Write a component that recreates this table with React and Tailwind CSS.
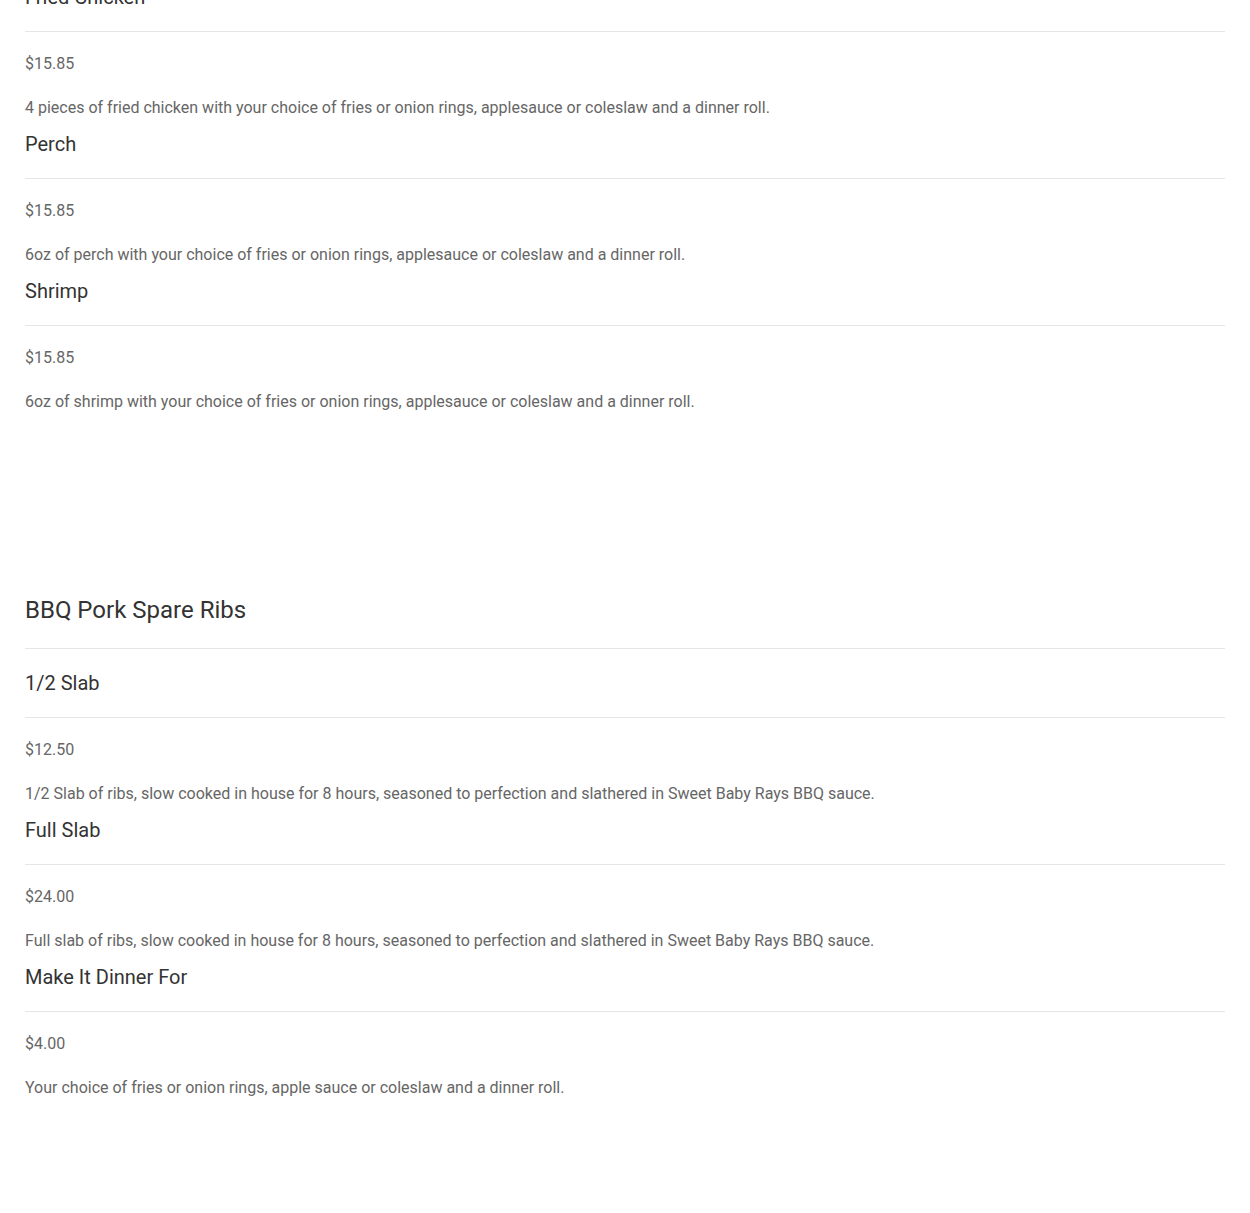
import React from "react";

const sections = [
  {
    title: null,
    items: [
      {
        name: "Fried Chicken",
        price: "$15.85",
        text: "4 pieces of fried chicken with your choice of fries or onion rings, applesauce or coleslaw and a dinner roll.",
      },
      {
        name: "Perch",
        price: "$15.85",
        text: "6oz of perch with your choice of fries or onion rings, applesauce or coleslaw and a dinner roll.",
      },
      {
        name: "Shrimp",
        price: "$15.85",
        text: "6oz of shrimp with your choice of fries or onion rings, applesauce or coleslaw and a dinner roll.",
      },
    ],
  },
  {
    title: "BBQ Pork Spare Ribs",
    items: [
      {
        name: "1/2 Slab",
        price: "$12.50",
        text: "1/2 Slab of ribs, slow cooked in house for 8 hours, seasoned to perfection and slathered in Sweet Baby Rays BBQ sauce.",
      },
      {
        name: "Full Slab",
        price: "$24.00",
        text: "Full slab of ribs, slow cooked in house for 8 hours, seasoned to perfection and slathered in Sweet Baby Rays BBQ sauce.",
      },
      {
        name: "Make It Dinner For",
        price: "$4.00",
        text: "Your choice of fries or onion rings, apple sauce or coleslaw and a dinner roll.",
      },
    ],
  },
];

const MenuItem = ({ item }) => (
  <div className="mb-[12px]">
    <h4 className="text-[20px] leading-[24px] text-[#333333] pb-[22px] border-b border-[#e6e6e6]">
      {item.name}
    </h4>
    <p className="mt-[20px] text-[16px] leading-[24px] text-[#666666]">
      {item.price}
    </p>
    <p className="mt-[20px] text-[16px] leading-[24px] text-[#666666]">
      {item.text}
    </p>
  </div>
);

const App = () => {
  return (
    <div
      className="bg-white w-[1250px] min-h-[1213px] px-[25px] overflow-hidden"
      style={{ fontFamily: "Roboto, 'Liberation Sans', sans-serif" }}
    >
      <div className="-mt-[15px]">
        {sections.map((section, i) => (
          <div key={i} className={i > 0 ? "mt-[182px]" : ""}>
            {section.title && (
              <h3 className="text-[24px] leading-[28px] text-[#333333] pb-[24px] border-b border-[#e6e6e6] mb-[22px]">
                {section.title}
              </h3>
            )}
            {section.items.map((item, j) => (
              <MenuItem key={j} item={item} />
            ))}
          </div>
        ))}
      </div>
    </div>
  );
};

export default App;
